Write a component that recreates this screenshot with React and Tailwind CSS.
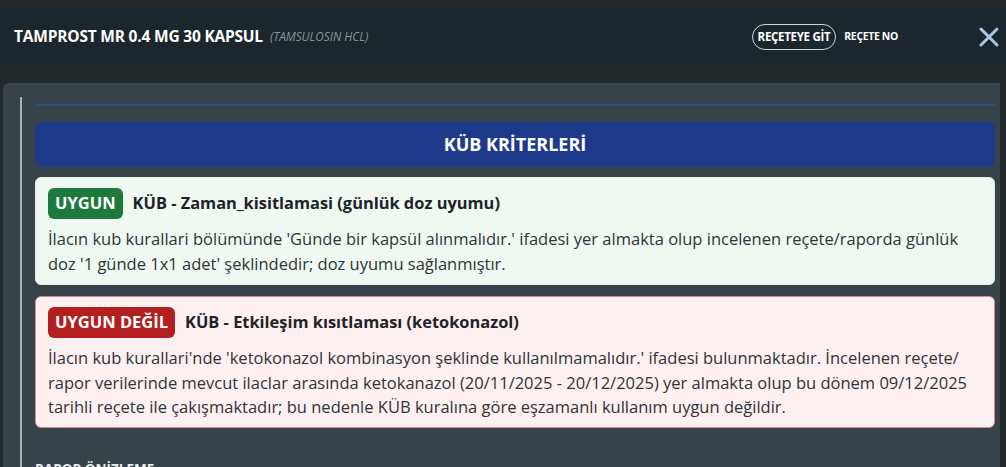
import React from 'react';

const criteria = [
  {
    ok: true,
    badge: 'UYGUN',
    title: 'KÜB - Zaman_kisitlamasi (günlük doz uyumu)',
    lines: [
      "İlacın kub kurallari bölümünde 'Günde bir kapsül alınmalıdır.' ifadesi yer almakta olup incelenen reçete/raporda günlük",
      "doz '1 günde 1x1 adet' şeklindedir; doz uyumu sağlanmıştır.",
    ],
  },
  {
    ok: false,
    badge: 'UYGUN DEĞİL',
    title: 'KÜB - Etkileşim kısıtlaması (ketokonazol)',
    lines: [
      "İlacın kub kurallari'nde 'ketokonazol kombinasyon şeklinde kullanılmamalıdır.' ifadesi bulunmaktadır. İncelenen reçete/",
      'rapor verilerinde mevcut ilaclar arasında ketokanazol (20/11/2025 - 20/12/2025) yer almakta olup bu dönem 09/12/2025',
      'tarihli reçete ile çakışmaktadır; bu nedenle KÜB kuralına göre eşzamanlı kullanım uygun değildir.',
    ],
  },
];

const App = () => {
  return (
    <div className="w-[1006px] h-[467px] overflow-hidden bg-[#22272a] pt-2 font-['Open_Sans',sans-serif]">
      <header className="h-[58px] bg-[#1c272d] flex items-center pl-[14px] pr-[6px]">
        <h1 className="text-[15.5px] font-bold text-white tracking-[-0.2px]">TAMPROST MR 0.4 MG 30 KAPSUL</h1>
        <span className="ml-[7px] text-[11.8px] italic text-[#8a959b]">(TAMSULOSIN HCL)</span>
        <div className="ml-auto flex items-center">
          <button className="h-[26px] px-[5px] rounded-full border border-[#cfd5d8] text-[11.5px] font-bold text-white tracking-[-0.3px]">
            REÇETEYE GİT
          </button>
          <span className="ml-[8px] text-[10.4px] font-bold text-white tracking-[-0.3px]">REÇETE NO</span>
          <svg className="ml-[80px]" width="22" height="22" viewBox="0 0 22 22" fill="none" stroke="#a9c6e3" strokeWidth="3" strokeLinecap="round">
            <path d="M3 3 L19 19 M19 3 L3 19" />
          </svg>
        </div>
      </header>

      <div className="mt-[17px] ml-[3px] mr-[6px] h-[400px] bg-[#374349] rounded-tl-md pt-[14px] pl-[17px] pr-[5px] flex">
        <div className="w-[2px] bg-[#aab3b7]" />
        <div className="flex-1 pl-[13px]">
          <div className="mt-[7px] h-[2px] bg-[#2d4f86]" />
          <div className="mt-[16px] h-[45px] rounded-md bg-[#1f3a8a] flex items-center justify-center">
            <h2 className="text-[18px] font-bold text-white">KÜB KRİTERLERİ</h2>
          </div>

          <div className="mt-[10px] flex flex-col gap-[11px]">
            {criteria.map((c) => (
              <div
                key={c.title}
                className={`rounded-md px-3 pt-[10px] border ${
                  c.ok ? 'pb-[8px] bg-[#eff9f2] border-[#e2efe6]' : 'pb-[7px] bg-[#fdf0f0] border-[#c98f8f]'
                }`}
              >
                <div className="flex items-center gap-[10px]">
                  <span
                    className={`h-[31px] px-[7px] flex items-center rounded-md text-[16.5px] font-bold text-white ${
                      c.ok ? 'bg-[#1e7a3c]' : 'bg-[#b31f1f]'
                    }`}
                  >
                    {c.badge}
                  </span>
                  <span className="text-[16.4px] font-bold text-[#1f2328]">{c.title}</span>
                </div>
                <div className="mt-[8px] text-[16.5px] leading-[24.5px] text-[#2f3438]">
                  {c.lines.map((line) => (
                    <p key={line} className="whitespace-nowrap">{line}</p>
                  ))}
                </div>
              </div>
            ))}
          </div>

          <div className="mt-[31px] text-[13.5px] font-bold text-[#e8ecee]">RAPOR ÖNİZLEME</div>
        </div>
      </div>
    </div>
  );
};

export default App;
